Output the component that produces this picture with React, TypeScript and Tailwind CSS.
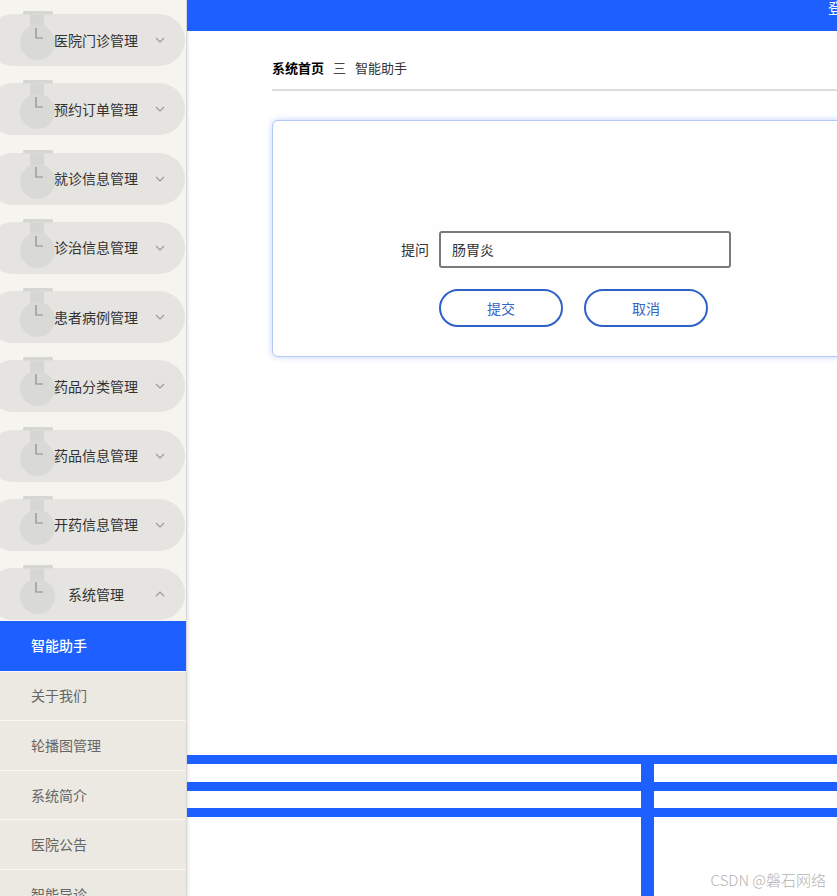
import React from "react";

const menuGroups = [
  "医院门诊管理",
  "预约订单管理",
  "就诊信息管理",
  "诊治信息管理",
  "患者病例管理",
  "药品分类管理",
  "药品信息管理",
  "开药信息管理",
];

const systemChildren = ["智能助手", "关于我们", "轮播图管理", "系统简介", "医院公告", "智能导诊"];

const MenuIcon: React.FC = () => (
  <svg
    width="35"
    height="49"
    viewBox="0 0 35 49"
    className="absolute left-[33px] top-[-3px]"
  >
    <rect x="3" y="0" width="30" height="3.5" rx="1.5" fill="#d6d6d3" />
    <path d="M10 3.5 H24 V16 H10 Z" fill="#d6d6d3" />
    <circle cx="17.5" cy="31.5" r="17.5" fill="#d9d9d6" />
    <path d="M16 17 V27 H23" fill="none" stroke="#8c8c8c" strokeWidth="1.2" />
  </svg>
);

const Chevron: React.FC<{ up?: boolean }> = ({ up }) => (
  <svg width="10" height="6" viewBox="0 0 10 6" className="ml-[9px]">
    <path
      d={up ? "M1 5 L5 1 L9 5" : "M1 1 L5 5 L9 1"}
      fill="none"
      stroke="#9a9a9a"
      strokeWidth="1.1"
    />
  </svg>
);

const MenuGroup: React.FC<{ title: string; open?: boolean }> = ({ title, open }) => (
  <div className="relative -ml-[13px] flex h-[52px] w-[198px] shrink-0 items-center rounded-full bg-[#e5e4e1] pl-[59px]">
    <MenuIcon />
    <span className="relative w-[100px] text-center text-[14px] text-[#333]">{title}</span>
    <Chevron up={open} />
  </div>
);

const Sidebar: React.FC = () => (
  <aside className="flex h-screen w-[187px] shrink-0 flex-col overflow-hidden border-r border-[#d8d8d8] bg-[#f5f4ef] shadow-[1px_0_3px_rgba(0,0,0,0.12)]">
    <div className="flex flex-col gap-[17.25px] pt-[14px]">
      {menuGroups.map((g) => (
        <MenuGroup key={g} title={g} />
      ))}
      <MenuGroup title="系统管理" open />
    </div>
    <ul className="mt-px">
      {systemChildren.map((c, i) => (
        <li
          key={c}
          className={
            i === 0
              ? "flex h-[49.6px] items-center bg-[#1e5fff] pl-[31px] text-[14px] font-medium text-white"
              : "flex h-[49.6px] items-center border-t-[1.5px] border-[#f8f7f3] bg-[#ebe9e2] pl-[31px] text-[14px] text-[#666]"
          }
        >
          {c}
        </li>
      ))}
    </ul>
  </aside>
);

const AssistantForm: React.FC = () => (
  <div className="mt-[29px] w-[700px] rounded-[6px] border border-[#b3c8f3] bg-[#fefefe] pb-[29px] pl-[128px] pt-[110px] shadow-[0_0_6px_rgba(30,95,255,0.28)]">
    <div className="flex items-center">
      <label className="w-[28px] text-[14px] text-[#333]">提问</label>
      <div className="ml-[10px] flex h-[37px] w-[292px] items-center rounded-[3px] border-2 border-[#7a7a7a] pl-[11px] text-[14px] text-[#333]">
        肠胃炎
      </div>
    </div>
    <div className="ml-[38px] mt-[21px] flex gap-[21px]">
      <button className="h-[38px] w-[124px] rounded-full border-2 border-[#2f62c8] text-[14px] text-[#3565c6]">
        提交
      </button>
      <button className="h-[38px] w-[124px] rounded-full border-2 border-[#2f62c8] text-[14px] text-[#3565c6]">
        取消
      </button>
    </div>
  </div>
);

const FooterBars: React.FC = () => (
  <footer className="relative h-[141px] shrink-0">
    <div className="h-[9px] bg-[#1e5fff]" />
    <div className="mt-[18px] h-[9px] bg-[#1e5fff]" />
    <div className="mt-[17px] h-[9px] bg-[#1e5fff]" />
    <div className="absolute bottom-0 left-[454px] top-0 w-[13px] bg-[#1e5fff]" />
    <span className="absolute bottom-[5px] right-[11px] text-[15px] font-light text-[#b4b4b4]">
      CSDN @磐石网络
    </span>
  </footer>
);

export default function App() {
  return (
    <div
      className="flex h-screen w-full overflow-hidden bg-white"
      style={{ fontFamily: '"Noto Sans CJK SC", "Liberation Sans", sans-serif' }}
    >
      <Sidebar />
      <main className="flex min-w-0 flex-1 flex-col overflow-hidden">
        <header className="h-[31px] shrink-0 overflow-hidden whitespace-nowrap bg-[#1e5fff] pl-[641px] text-[15px] leading-[16px] text-white">
          登录
        </header>
        <section className="flex-1 pl-[85px]">
          <div className="mt-[27px] flex h-[33px] w-[700px] items-start border-b-2 border-[#dcdcdc] text-[13px] leading-[20px]">
            <span className="font-bold text-black">系统首页</span>
            <span className="mx-[9px] text-[#444]">三</span>
            <span className="text-[#333]">智能助手</span>
          </div>
          <AssistantForm />
        </section>
        <FooterBars />
      </main>
    </div>
  );
}
